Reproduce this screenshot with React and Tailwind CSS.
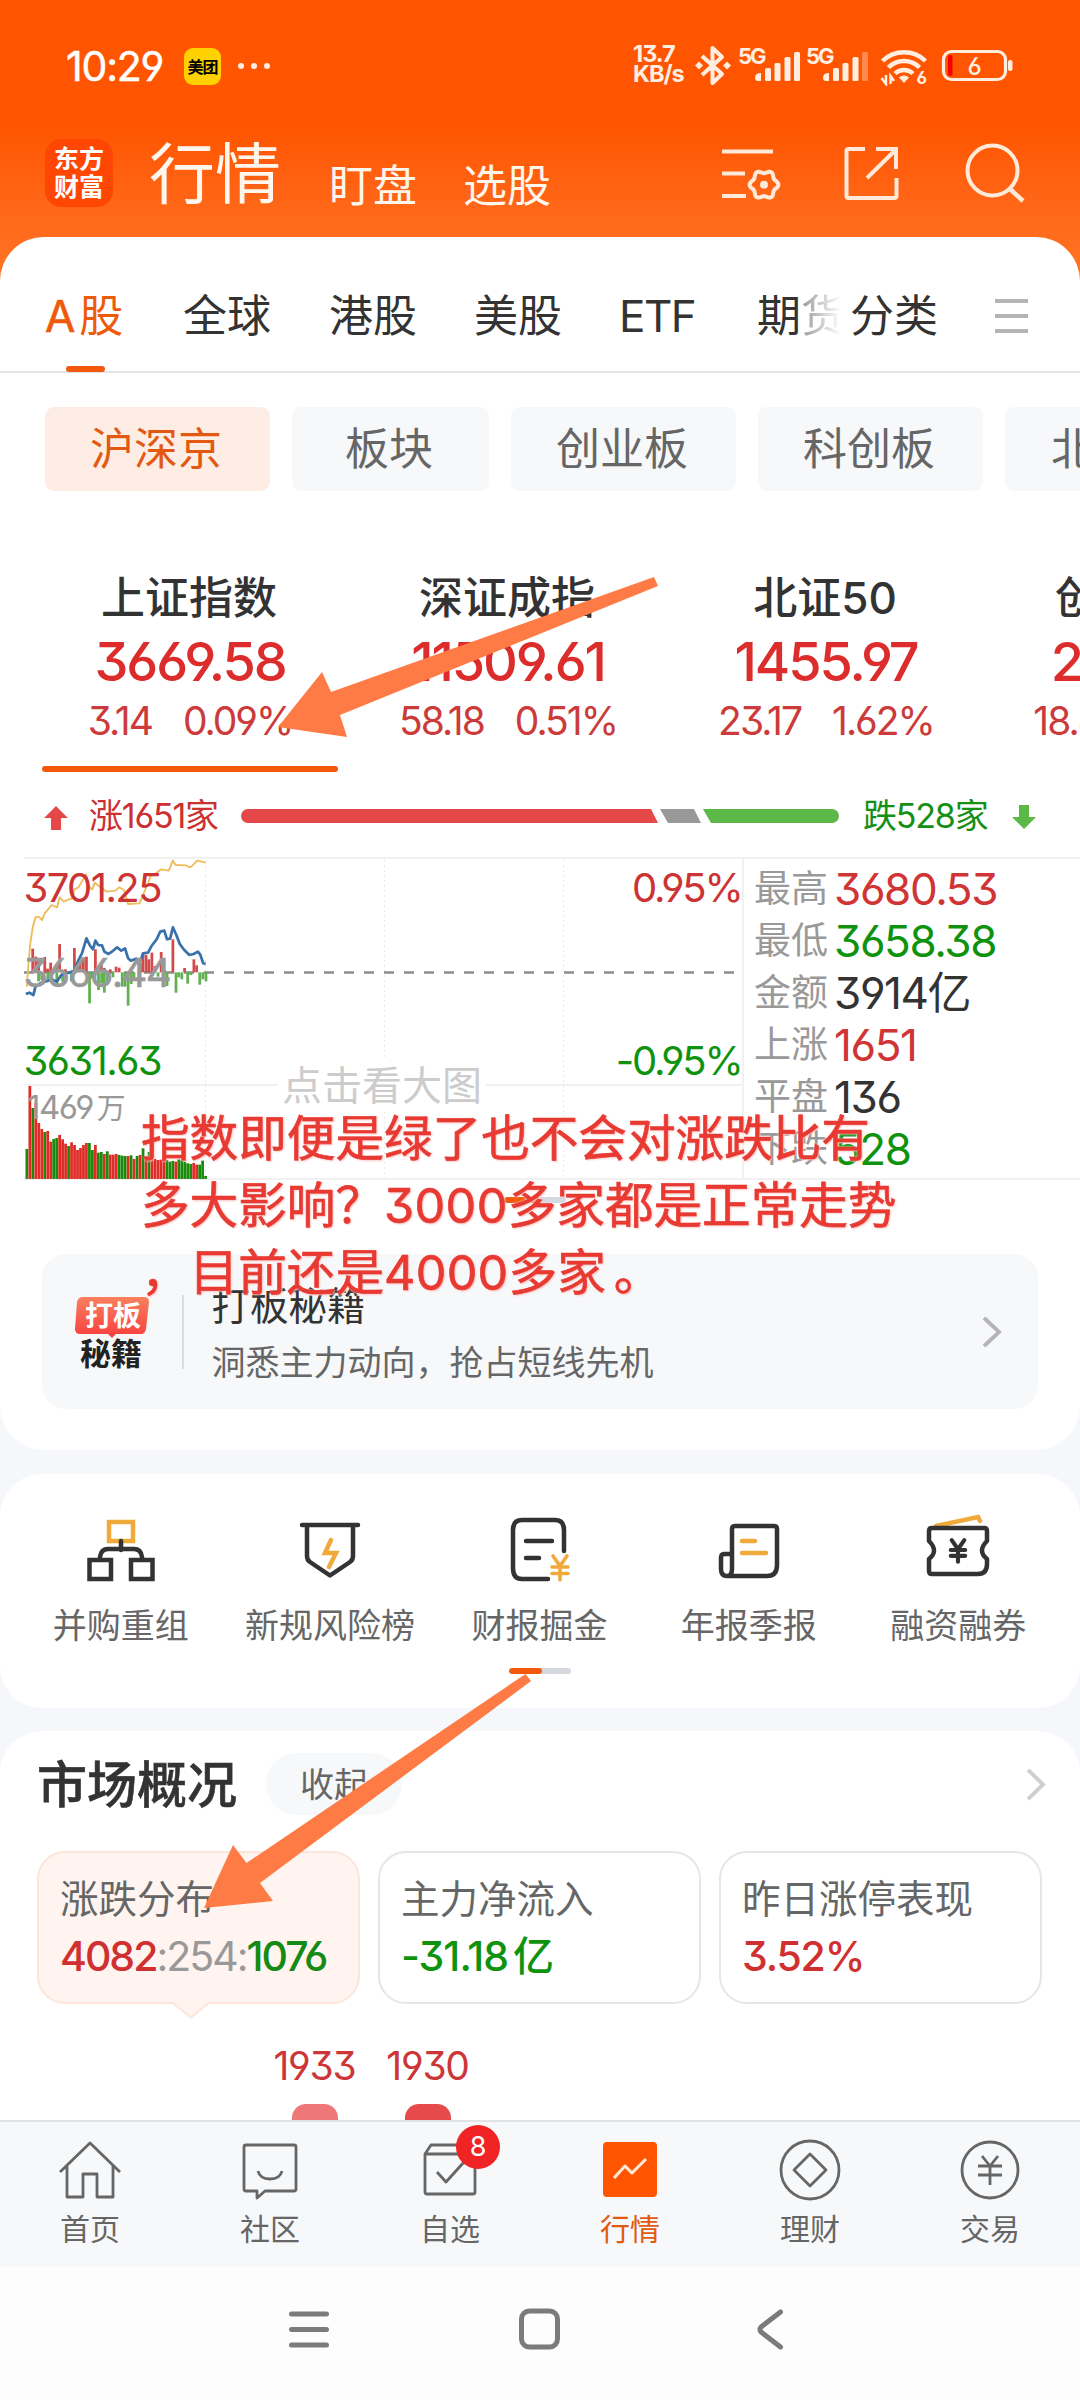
import React from "react";

const INDICES = [
  { name: "上证指数", value: "3669.58", diff: "3.14", pct: "0.09%" },
  { name: "深证成指", value: "11509.61", diff: "58.18", pct: "0.51%" },
  { name: "北证50", value: "1455.97", diff: "23.17", pct: "1.62%" },
  { name: "创业板指", value: "2458.12", diff: "18.62", pct: "0.76%" },
];

const STATS = [
  ["最高", "3680.53", "text-[#d03434]"],
  ["最低", "3658.38", "text-[#0f930f]"],
  ["金额", "3914亿", "text-[#333]"],
  ["上涨", "1651", "text-[#d03434]"],
  ["平盘", "136", "text-[#333]"],
  ["下跌", "528", "text-[#0f930f]"],
];

const VOLUME_TOPS = [
  927, 738, 804, 789, 849, 867, 876, 873, 905, 897, 894, 885, 898, 911, 918, 907, 915, 930, 924, 915,
  909, 909, 930, 915, 938, 936, 942, 934, 944, 944, 942, 945, 947, 948, 948, 946, 957, 948, 945, 925,
  948, 936, 944, 957, 960, 959, 960, 960, 965, 963, 965, 958, 961, 965, 970, 972, 969, 974, 974, 962,
  1008,
];
const VOLUME_KINDS = "grgrrrgrrggrrrgrrrrrrggrggrgrrrgggrgrgrgrgrrrrrgggrgggggrrgggr".split("");

const RISE = [
  [95, 326], [104, 350], [112, 362], [130, 351], [138, 386], [147, 368], [156, 390], [164, 372], [173, 312], [190, 388],
  [216, 324], [225, 372], [233, 362], [242, 352], [251, 350], [277, 328], [294, 366], [303, 384], [320, 388],
  [337, 380], [346, 383], [407, 372], [415, 338], [424, 345], [432, 358], [441, 338], [450, 378], [468, 336],
  [477, 390], [502, 298], [536, 384], [563, 358], [571, 376],
];
const FALL = [
  [112, 424], [121, 420], [139, 420], [165, 440], [182, 425], [207, 424], [260, 490], [268, 416], [286, 450],
  [295, 430], [303, 458], [312, 430], [328, 412], [355, 440], [363, 440], [372, 497], [381, 432], [389, 416],
  [459, 410], [476, 424], [485, 438], [511, 458], [519, 412], [528, 418], [545, 431], [554, 405], [580, 434],
  [589, 418], [598, 424],
];

// Six-lobed outline of the settings gear.
const GEAR = Array.from({ length: 73 }, (_, i) => {
  const a = (i * Math.PI) / 36;
  const r = 12.9 + 1.5 * Math.cos(6 * a);
  return `${(764 + r * Math.cos(a)).toFixed(2)},${(184.7 + r * Math.sin(a)).toFixed(2)}`;
}).join(" ");

const Yuan = ({ x, y, s = 1, color, w = 3.6 }) => (
  <path
    transform={`translate(${x} ${y}) scale(${s})`}
    d="M-7-11 0-1 7-11M0-1V13M-8 0H8M-8 6.500H8"
    stroke={color}
    strokeWidth={w}
    fill="none"
  />
);

function StatusBar() {
  return (
    <div className="flex h-[118px] items-start pt-[44px] text-white">
      <div className="ml-[66px] h-[44px] w-[103px] text-[41px] leading-[44px] tracking-[-1.200px] [-webkit-text-stroke:0.5px_#fff]">10:29</div>
      <div className="mt-[4px] ml-[15px] flex h-[37px] w-[37px] items-center justify-center rounded-[9px] bg-[#ffd100] text-[16px] font-bold tracking-[-1px] text-black">
        美团
      </div>
      <div className="mt-[19px] ml-[17px] flex gap-[7px]">
        <i className="h-[6px] w-[6px] rounded-full bg-[#ffeee0]" />
        <i className="h-[6px] w-[6px] rounded-full bg-[#ffeee0]" />
        <i className="h-[6px] w-[6px] rounded-full bg-[#ffeee0]" />
      </div>
      <div className="ml-[363px] w-[59px] text-[23.500px] leading-[20px] font-bold tracking-[-1px] whitespace-nowrap text-[#ffeee0]">
        <div>13.7</div>
        <div>KB/s</div>
      </div>
      <svg width="326" height="42" viewBox="692 44 326 42" className="text-[#ffeee0]" fill="none" stroke="currentColor">
        <path d="M702 56 722 74 712.500 83V48L722 57 702 75" strokeWidth="4" strokeLinejoin="round" />
        <path d="M695 65.500l4-4 4 4-4 4ZM723 65.500l4-4 4 4-4 4Z" fill="currentColor" stroke="none" />
        <g fill="currentColor" stroke="none">
          <text x="738" y="63.500" fontSize="22" fontWeight="700" letterSpacing="-2">5G</text>
          <text x="806" y="63.500" fontSize="22" fontWeight="700" letterSpacing="-2">5G</text>
          <path d="M755 78Q755 73 761 73V81H758Q755 81 755 78ZM823 78Q823 73 829 73V81H826Q823 81 823 78Z" />
          <rect x="765" y="68" width="6" height="13" rx="1.500" />
          <rect x="774.500" y="63" width="6" height="18" rx="1.500" />
          <rect x="784.500" y="57" width="6" height="24" rx="1.500" />
          <rect x="794" y="52" width="6" height="29" rx="1.500" />
          <rect x="833" y="68" width="6" height="13" rx="1.500" />
          <rect x="842.500" y="63" width="6" height="18" rx="1.500" />
          <rect x="852.500" y="57" width="6" height="24" rx="1.500" />
          <rect x="862" y="52" width="6" height="29" rx="1.500" opacity=".35" />
          <path d="M899 77.500Q904 73.500 909 77.500L904 83Z" />
          <text x="916.500" y="84" fontSize="17" fontWeight="700">6</text>
        </g>
        <path d="M882.500 61a31 31 0 0 1 43 0M888.500 67.500a22 22 0 0 1 31 0M895 73.500a13 13 0 0 1 18 0" strokeWidth="4.500" />
        <path d="M886 75v9L881.500 78M890.500 84V76L894 81" strokeWidth="2.500" />
        <rect x="943.500" y="51.500" width="62" height="28" rx="8" strokeWidth="3.200" />
        <rect x="948" y="55" width="4.500" height="21" rx="2" fill="#f40000" stroke="none" />
        <rect x="1008" y="60" width="4.500" height="11" rx="2" fill="currentColor" stroke="none" />
        <text x="974.500" y="75" textAnchor="middle" fontSize="24" fontWeight="500" fill="currentColor" stroke="none">6</text>
      </svg>
    </div>
  );
}

function Header() {
  return (
    <div className="flex h-[119px] text-[#fff6ee]">
      <div className="mt-[21px] ml-[45px] flex h-[68px] w-[68px] flex-col items-center justify-center rounded-[16px] bg-[#ff4703] text-[25px] leading-[28px] font-bold text-white">
        <div>东方</div>
        <div>财富</div>
      </div>
      <div className="mt-[16px] ml-[36px] w-[180px] text-[66px] leading-[80px]">行情</div>
      <div className="mt-[38px] w-[134px] text-[44px] leading-[60px]">盯盘</div>
      <div className="mt-[38px] w-[250px] text-[44px] leading-[60px]">选股</div>
      <svg width="330" height="80" viewBox="713 134 330 80" fill="none" stroke="#ffe9d8" strokeWidth="4" className="mt-[16px]">
        <path d="M722 151.500H773M722 173.500H745M722 196H746" />
        <polygon points={GEAR} strokeLinejoin="round" />
        <circle cx="764" cy="184.700" r="4" fill="#ffe9d8" stroke="none" />
        <path d="M865 149H848.500Q846.500 149 846.500 151V196Q846.500 198 848.500 198H894Q896.500 198 896.500 196V178M876 149H896V169M896 149.500 867 178" />
        <circle cx="992.500" cy="170.500" r="25" />
        <path d="M1010 189 1023 201" strokeWidth="4.500" />
      </svg>
    </div>
  );
}

function Tabs() {
  return (
    <div className="flex h-[136px] border-b-2 border-[#e4e4e4] pt-[51px] pl-[45px] text-[44px] leading-[56px] whitespace-nowrap text-[#333]">
      <div className="relative w-[138px] text-[#ee5a0c]">
        <span className="tracking-[4px] [-webkit-text-stroke:0.6px_#ee5a0c]">A</span>股
        <div className="absolute top-[78px] left-[21px] h-[6px] w-[39px] rounded-full bg-[#f2590c]" />
      </div>
      <div className="w-[146px]">全球</div>
      <div className="w-[145px]">港股</div>
      <div className="w-[145px]">美股</div>
      <div className="w-[138px] tracking-[-1.500px]">ETF</div>
      <div className="w-[93px] overflow-hidden">
        <span>期</span>
        <span className="bg-linear-to-r from-[#999] to-white to-90% bg-clip-text text-transparent">货</span>
      </div>
      <div className="w-[145px]">分类</div>
      <div className="mt-[11px] flex w-[33px] flex-col gap-[11px]">
        <div className="h-[4px] bg-[#b4b4b4]" />
        <div className="h-[4px] bg-[#b4b4b4]" />
        <div className="h-[4px] bg-[#b4b4b4]" />
      </div>
    </div>
  );
}

const Chip = ({ children, active, wide }) => (
  <div
    className={`flex h-[84px] shrink-0 items-center justify-center rounded-[9px] pr-[3px] text-[44px] ${wide ? "w-[225px]" : "w-[197px]"} ${
      active ? "bg-[#feede4] text-[#e25a12]" : "bg-[#f7f8fa] text-[#666]"
    }`}
  >
    {children}
  </div>
);

function IndexStrip() {
  return (
    <div className="flex h-[216px] gap-[22px] overflow-hidden pl-[42px]">
      {INDICES.map((it, i) => (
        <div key={it.name} className="flex h-[209px] w-[296px] shrink-0 flex-col items-center whitespace-nowrap">
          <div className="mt-[7px] h-[56px] pr-[2px] text-[44px] leading-[56px] font-medium text-[#333]">{it.name}</div>
          <div className="h-[72px] text-[54px] leading-[72px] font-medium tracking-[-2.100px] text-[#dc2c2c]">{it.value}</div>
          <div className="flex h-[46px] gap-[31px] text-[39px] leading-[46px] tracking-[-2px] text-[#cc3a3a]">
            <span>{it.diff}</span>
            <span>{it.pct}</span>
          </div>
          {i === 0 && <div className="mt-[22px] h-[6px] w-full rounded-full bg-[#f2590c]" />}
        </div>
      ))}
    </div>
  );
}

function Breadth() {
  return (
    <div className="flex h-[78px] items-center pb-[4px] pl-[44px] text-[34px] leading-[40px] whitespace-nowrap">
      <svg width="24" height="24" viewBox="0 0 24 24" className="mt-[3px]">
        <path d="M12 0 24 12H17V24H7V12H0Z" fill="#e54848" />
      </svg>
      <div className="ml-[21px] w-[152px] tracking-[-1.200px] text-[#cc3030]">涨1651家</div>
      <svg width="598" height="14" viewBox="0 0 598 14">
        <path d="M7 0H410L417 14H7A7 7 0 0 1 7 0Z" fill="#e54848" />
        <path d="M419 0H453L460 14H427Z" fill="#999" />
        <path d="M462 0H591A7 7 0 0 1 591 14H470Z" fill="#5cb847" />
      </svg>
      <div className="ml-[24px] w-[149px] tracking-[-1.200px] text-[#159015]">跌528家</div>
      <svg width="24" height="24" viewBox="0 0 24 24" className="mt-[1px]">
        <path d="M12 24 24 12H17V0H7V12H0Z" fill="#5cb847" />
      </svg>
    </div>
  );
}

function Chart() {
  return (
    <div className="flex h-[324px] pl-[24px]">
      <svg width="718" height="324" viewBox="24 857 718 324" className="shrink-0">
        <path d="M24 858H742M24 1085H278M486 1085H742M24 1179H742" stroke="#f1f1f1" strokeWidth="2" />
        <path d="M205.500 860V1178M384.500 860V1057M384.500 1112V1178M563.500 860V1178" stroke="#e8e8e8" strokeDasharray="2 3" />
        <path d="M24 972.500H742" stroke="#8c8c8c" strokeWidth="2.500" strokeDasharray="10 10" />
        <g transform="translate(0 840) scale(.3444 .3333)">
          {RISE.map(([x, t]) => (
            <rect key={x} x={x - 4} y={t} width="8" height={397 - t} fill="#d24a4a" />
          ))}
          {FALL.map(([x, b]) => (
            <rect key={x} x={x - 4} y="397" width="8" height={b - 397} fill="#62b050" />
          ))}
          {VOLUME_TOPS.map((t, i) => (
            <rect key={i} x={74 + i * 8.65} y={t} width="8" height={1017 - t} fill={VOLUME_KINDS[i] === "r" ? "#e02c26" : "#1b8a0c"} />
          ))}
          <path
            d="M78 440 82 380 88 310 95 262 103 232 112 230 122 240 130 220 150 195 166 202 173 172 185 185 200 178 210 175 216 148 228 142 250 103 258 140 268 148 275 128 290 140 310 155 335 152 346 142 360 150 372 192 405 190 415 165 430 130 437 108 447 105 455 98 468 88 490 92 502 62 510 75 540 76 550 82 558 78 572 62 597 68"
            fill="none" stroke="#eebc5c" strokeWidth="5.500" strokeLinejoin="round"
          />
          <path
            d="M75 462 85 458 97 465 103 440 120 428 140 422 150 418 165 425 178 405 200 398 215 392 228 360 238 340 251 295 262 318 270 328 277 302 285 315 296 316 303 335 315 342 325 335 340 322 352 332 363 325 372 355 380 362 395 356 408 360 416 340 430 338 440 318 455 298 465 275 477 272 485 298 494 296 502 262 512 285 522 312 535 330 550 345 562 342 575 335 582 345 590 370 597 372"
            fill="none" stroke="#3a70ac" strokeWidth="8" strokeLinejoin="round"
          />
        </g>
        <g fontSize="40" letterSpacing="-1.600">
          <text x="23.500" y="902" fill="#cc3333">3701.25</text>
          <text x="23.500" y="987" fill="#999" stroke="#999" strokeWidth=".6">3666.44</text>
          <text x="23.500" y="1075" fill="#0f930f">3631.63</text>
        </g>
        <g fontSize="40" letterSpacing="-2.200">
          <text x="741.500" y="902" textAnchor="end" fill="#cc3333">0.95%</text>
          <text x="741.500" y="1075" textAnchor="end" fill="#0f930f">-0.95%</text>
        </g>
        <text x="27" y="1119" fontSize="33" letterSpacing="-1.500" fill="#999">1469<tspan fontSize="29" dx="4">万</tspan></text>
        <text x="282" y="1100" fontSize="40" fill="#ccc">点击看大图</text>
      </svg>
      <div className="h-[323px] flex-1 border-y-2 border-l-2 border-[#f1f1f1] pt-[4px] pl-[10px] whitespace-nowrap">
        {STATS.map(([label, value, color]) => (
          <div key={label} className="flex h-[52px] items-center">
            <span className="w-[80px] text-[37px] leading-[52px] text-[#999]">{label}</span>
            <span className={`text-[44px] leading-[52px] tracking-[-1.400px] ${color}`}>{value}</span>
          </div>
        ))}
      </div>
    </div>
  );
}

const Pager = () => (
  <div className="flex h-[6px] w-[62px] overflow-hidden rounded-full bg-[#d5d8de]">
    <div className="w-[33px] rounded-full bg-[#f2590c]" />
  </div>
);

const Chevron = ({ h, color }) => (
  <svg width="20" height={h} viewBox="0 0 20 34" fill="none" stroke={color} strokeWidth="4" preserveAspectRatio="none">
    <path d="M2 2 17 17 2 32" />
  </svg>
);

function Promo() {
  return (
    <div className="mt-[51px] ml-[42px] flex h-[155px] w-[996px] items-center rounded-[24px] bg-[#f7f8fa]">
      <svg width="78" height="74" viewBox="73 1295 78 74" className="ml-[31px]">
        <defs>
          <linearGradient id="promo" x2="0" y2="1">
            <stop stopColor="#f9805e" />
            <stop offset="1" stopColor="#f83e3e" />
          </linearGradient>
        </defs>
        <path d="M83 1297H144Q149 1297 149 1302L146 1329Q145 1334 141 1334H116L112 1338 108 1334H80Q75 1334 75 1329L77 1302Q78 1297 83 1297Z" fill="url(#promo)" />
        <text x="113" y="1326" textAnchor="middle" fontSize="28" fontWeight="700" fill="#fff">打板</text>
        <text x="111" y="1365" textAnchor="middle" fontSize="31" fontWeight="700" fill="#222">秘籍</text>
      </svg>
      <div className="ml-[31px] h-[74px] w-[1.500px] bg-[#dcdde0]" />
      <div className="ml-[28px] w-[770px] pt-[4px]">
        <div className="text-[38.500px] leading-[58px] text-[#333]">打板秘籍</div>
        <div className="text-[34px] leading-[56px] text-[#666]">洞悉主力动向，抢占短线先机</div>
      </div>
      <Chevron h={32} color="#b4b4b6" />
    </div>
  );
}

const TOOLS = [
  ["并购重组", (
    <>
      <rect x="-12" y="-29" width="24" height="19" stroke="#f0aa3c" />
      <path d="M0-10V-1M-21 8V6Q-20-2-13-2H13Q20-2 21 6V8" />
      <rect x="-31.500" y="9" width="21.500" height="19" />
      <rect x="10" y="9" width="21.500" height="19" />
    </>
  )],
  ["新规风险榜", (
    <>
      <path d="M-28-26H28M-23-26V5Q-23 9-20 11L0 24.500 20 11Q23 9 23 5V-26" strokeLinejoin="round" />
      <path d="M1-11-5 2H6L-1 16" stroke="#f0aa3c" />
    </>
  )],
  ["财报掘金", (
    <>
      <path d="M25 1V-20Q25-30 16-30H-17Q-26-30-26-20V18Q-26 29-17 29H9M-13-9H13M-13 8H0" transform="translate(0 -1)" />
      <Yuan x={21} y={16} color="#f0aa3c" />
    </>
  )],
  ["年报季报", (
    <>
      <path d="M-17 2V-22Q-17-25-14-25H25Q28-25 28-22V14Q28 25 18 25H-22Q-28 25-28 18V7Q-28 3-25 3H-17V18Q-17 25-22 25" />
      <path d="M-7-10H6M-7 2H17" stroke="#f0aa3c" />
    </>
  )],
  ["融资融券", (
    <>
      <path d="M-22-25 20-34 22-30" stroke="#f0aa3c" />
      <path d="M-29-20Q-29-23-26-23H26Q29-23 29-20V-10Q19 0 29 8V13Q29 23 20 23H-26Q-29 23-29 20V8Q-19 0-29-10Z" strokeLinejoin="round" />
      <Yuan x={0} y={-1} s={0.9} color="#333" w={4.6} />
    </>
  )],
];

function Tools() {
  return (
    <div className="mt-[24px] h-[234px] rounded-[42px] bg-white px-[16px] pt-[40px]">
      <div className="flex">
        {TOOLS.map(([label, icon]) => (
          <div key={label} className="flex w-[209.400px] flex-col items-center">
            <svg width="76" height="74" viewBox="-38 -37 76 74" fill="none" stroke="#333" strokeWidth="4.500" strokeLinecap="round">
              {icon}
            </svg>
            <div className="mt-[14px] text-[34px] leading-[48px] whitespace-nowrap text-[#666]">{label}</div>
          </div>
        ))}
      </div>
      <div className="mt-[18px] ml-[493px]">
        <Pager />
      </div>
    </div>
  );
}

const Metric = ({ label, children, active }) => (
  <div
    className={`relative flex h-[153px] w-[323px] flex-col rounded-[28px] border-2 pt-[21px] pl-[21px] whitespace-nowrap ${
      active ? "border-[#fce6da] bg-[#fff4ef]" : "border-[#e6e6e6] bg-white"
    }`}
  >
    <div className="text-[38.500px] leading-[50px] text-[#666]">{label}</div>
    <div className="mt-[3px] text-[41px] leading-[58px] font-medium tracking-[-2px]">{children}</div>
    {active && (
      <svg width="40" height="18" viewBox="0 0 40 18" className="absolute top-[149px] left-[132px]">
        <path d="M2 0H38L22 14Q20 17 18 14Z" fill="#fff4ef" />
        <path d="M2 1 18 14Q20 17 22 14L38 1" fill="none" stroke="#fce6da" strokeWidth="2" />
      </svg>
    )}
  </div>
);

function Market() {
  return (
    <div className="mt-[23px] h-[389px] overflow-hidden rounded-t-[42px] bg-white pl-[37px]">
      <div className="flex h-[120px] items-center pb-[14px]">
        <div className="w-[229px] pt-[2px] text-[50px] font-medium text-[#333] [-webkit-text-stroke:0.6px_#333]">市场概况</div>
        <div className="flex h-[62px] w-[136px] items-center justify-center rounded-full bg-[#f7f8fa] text-[34px] text-[#666]">收起</div>
        <div className="ml-[624px]">
          <Chevron h={33} color="#cfcfcf" />
        </div>
      </div>
      <div className="flex gap-[18px]">
        <Metric label="涨跌分布" active>
          <span className="text-[#d03030]">4082</span>
          <span className="font-normal text-[#999]">:254:</span>
          <span className="text-[#158a15]">1076</span>
        </Metric>
        <Metric label="主力净流入">
          <span className="tracking-[-1px] text-[#0f930f]">-31.18<span className="ml-[5px]">亿</span></span>
        </Metric>
        <Metric label="昨日涨停表现">
          <span className="tracking-[-1.200px] text-[#d03030]">3.52%</span>
        </Metric>
      </div>
      <div className="mt-[37px] ml-[221px] flex text-[39px] leading-[50px] tracking-[-1.200px] text-[#cc3636]">
        <div className="flex w-[113px] flex-col items-center">
          1933
          <div className="mt-[13px] h-[40px] w-[46px] rounded-[14px] bg-[#ee7878]" />
        </div>
        <div className="flex w-[113px] flex-col items-center">
          1930
          <div className="mt-[13px] h-[40px] w-[46px] rounded-[14px] bg-[#e64a4a]" />
        </div>
      </div>
    </div>
  );
}

const NAV = [
  ["首页", <path key="i" d="M-30 2 0-27 30 2M-23-4V27H-7V4H7V27H23V-4" />],
  ["社区", <path key="i" d="M-24-25H24Q26-25 26-23V19Q26 21 24 21H-5L-13 28V21H-24Q-26 21-26 19V-23Q-26-25-24-25ZM-12 1Q-10 9 0 9T12 1" />],
  ["自选", <path key="i" d="M-25-16-19-25H19L25-16V22Q25 24 23 24H-23Q-25 24-25 22V-16H25M-13 2-4 12 14-8" />],
  ["行情", (
    <g key="i">
      <rect x="-27" y="-28" width="54" height="55" rx="4" fill="#ff5500" stroke="none" />
      <path d="M-16 8-5-4 2 3 16-11" stroke="#ffe9d8" strokeWidth="3" />
    </g>
  )],
  ["理财", <g key="i"><circle r="29" /><path d="M0-16 16 0 0 16-16 0Z" /></g>],
  ["交易", <g key="i"><circle r="28" /><path d="M-8-14 0-4 8-14M0-4V15M-12-4H12M-12 5H12" /></g>],
];

function BottomBar() {
  return (
    <div className="flex h-[147px] border-t-2 border-[#e2e3e5] bg-[#f7f8fa] pt-[12px]">
      {NAV.map(([label, icon], i) => (
        <div key={label} className="relative flex w-[180px] flex-col items-center">
          <svg width="72" height="72" viewBox="-36 -36 72 72" fill="none" stroke="#666" strokeWidth="2.800" strokeLinejoin="round">
            {icon}
          </svg>
          <div className={`mt-[3px] text-[30px] leading-[40px] ${i === 3 ? "text-[#e25a12]" : "text-[#666]"}`}>{label}</div>
          {i === 2 && (
            <div className="absolute -top-[9px] left-[96px] flex h-[44px] w-[44px] items-center justify-center rounded-full bg-[#f02424] text-[27px] text-white">
              8
            </div>
          )}
        </div>
      ))}
    </div>
  );
}

function SystemNav() {
  return (
    <div className="flex h-[133px] bg-[#fdfdfd] pt-[37px] pl-[277px]">
      <svg width="520" height="50" viewBox="277 2304 520 50" fill="none" stroke="#7b7b7b" strokeWidth="5" strokeLinecap="round">
        <path d="M291.500 2314H326.500M291.500 2329.500H326.500M291.500 2345H326.500" />
        <rect x="521.500" y="2311" width="36" height="36" rx="8" />
        <path d="M780.500 2312 761 2327Q759 2329.500 761 2332L780.500 2347" />
      </svg>
    </div>
  );
}

function Annotations() {
  return (
    <div className="pointer-events-none absolute inset-0">
      <svg width="1080" height="2400" viewBox="0 0 1080 2400" className="absolute inset-0" fill="#ff7b46">
        <path d="M654 577 658 586 340 715 347 737 278 727 322 672 331 692Z" />
        <path d="M525.500 1674 531 1681 260 1883 273 1901 204 1908 233 1845 246.500 1863Z" />
      </svg>
      <div className="absolute top-[1105px] left-[141px] text-[48.600px] leading-[67px] whitespace-nowrap text-[#e83a32] [text-shadow:0_0_3px_#fff,1px_1px_2px_#f5a09c] [-webkit-text-stroke:0.7px_#e83a32]">
        <div>指数即便是绿了也不会对涨跌比有</div>
        <div>多大影响？<span className="tracking-[0.400px]">3000</span>多家都是正常走势</div>
        <div>，目前还是<span className="tracking-[0.300px]">4000</span>多家<span className="ml-[8px]">。</span></div>
      </div>
    </div>
  );
}

export default function App() {
  return (
    <div className="relative h-[2400px] w-[1080px] overflow-hidden bg-[#f5f7fa] [font-family:Inter,'Noto_Sans_CJK_SC',sans-serif] [font-feature-settings:'cv03','cv04','cv09']">
      <div className="h-[300px] bg-linear-to-b from-[#ff5500] from-42% to-[#ff7020] to-85%">
        <StatusBar />
        <Header />
      </div>
      <div className="-mt-[63px] h-[1213px] rounded-[44px] bg-white">
        <Tabs />
        <div className="mt-[34px] mb-[72px] flex gap-[22px] overflow-hidden pl-[45px]">
          <Chip active wide>沪深京</Chip>
          <Chip>板块</Chip>
          <Chip wide>创业板</Chip>
          <Chip wide>科创板</Chip>
          <div className="flex h-[84px] w-[225px] shrink-0 items-center rounded-[9px] bg-[#f7f8fa] pl-[46px] text-[44px] text-[#666]">北交所</div>
        </div>
        <IndexStrip />
        <Breadth />
        <Chart />
        <div className="mt-[16px] ml-[504px] h-[6px]">
          <Pager />
        </div>
        <Promo />
      </div>
      <Tools />
      <Market />
      <BottomBar />
      <SystemNav />
      <Annotations />
    </div>
  );
}
